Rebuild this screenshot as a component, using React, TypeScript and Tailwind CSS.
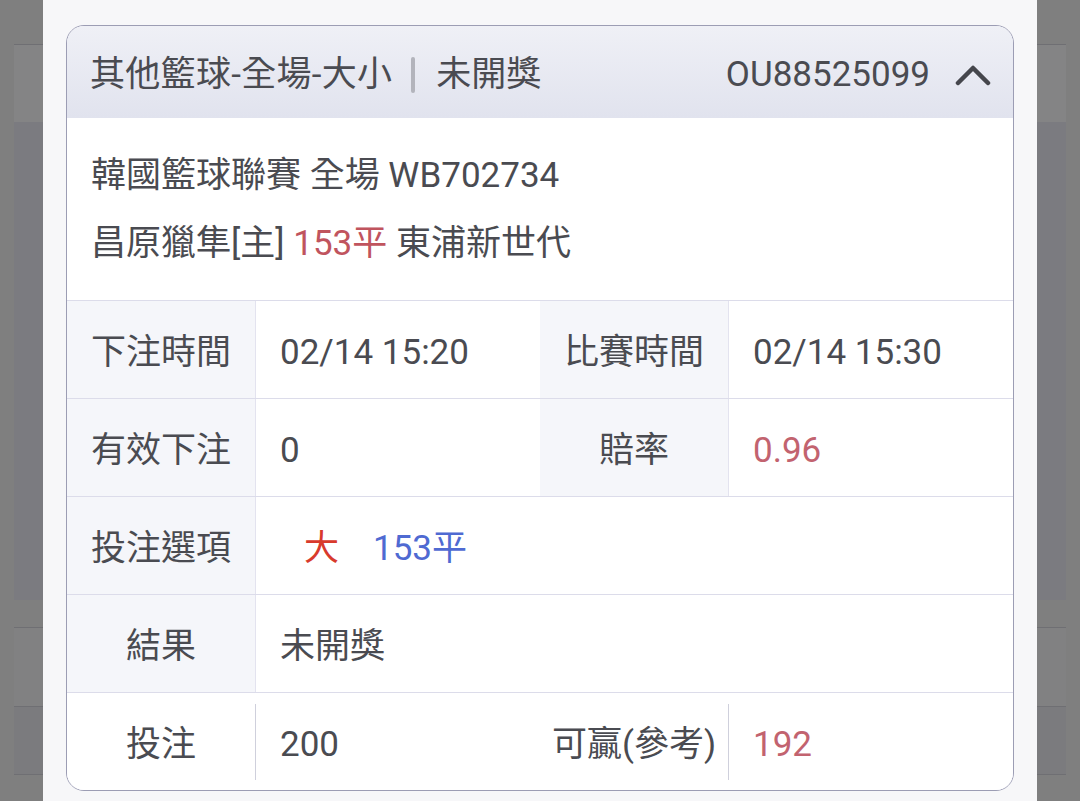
import React from 'react';

const font = "font-[Roboto,'Noto_Sans_CJK_TC',sans-serif]";

function Backdrop() {
  return (
    <div className="mx-[14px] flex flex-col">
      <div className="h-[45px] border-b border-[#6f6f73]" />
      <div className="h-[77px] bg-[#848485]" />
      <div className="h-[478px] bg-[#7b7b80]" />
      <div className="h-[28px] border-b border-[#6f6f73]" />
      <div className="h-[79px] border-b border-[#6f6f73] bg-[#818182]" />
      <div className="h-[68px] border-b border-[#6f6f73] bg-[#7b7b7e]" />
      <div className="h-[25px]" />
    </div>
  );
}

function Label({ children, white = false }: { children: React.ReactNode; white?: boolean }) {
  return (
    <div
      className={`flex items-center justify-center pt-[5px] ${white ? 'bg-white' : 'bg-[#f5f6fa]'}`}
    >
      {children}
    </div>
  );
}

function Value({
  children,
  span = false,
}: {
  children: React.ReactNode;
  span?: boolean;
}) {
  return (
    <div
      className={`flex items-center border-l border-[#e3e3ef] bg-white pl-[24px] pt-[5px] ${
        span ? 'col-span-3' : ''
      }`}
    >
      {children}
    </div>
  );
}

function ShortValue({ children }: { children: React.ReactNode }) {
  return (
    <div className="flex items-center bg-white">
      <div className="flex h-[76px] items-center border-l border-[#cfd0dc] pl-[24px] pt-[5px]">
        {children}
      </div>
    </div>
  );
}

export default function App() {
  return (
    <div className={`relative h-[801px] w-full overflow-hidden bg-[#7f7f7f] ${font}`}>
      <Backdrop />

      <div className="absolute inset-y-0 left-[43px] w-[994px] bg-[#f7f7f9] px-[23px] pt-[25px]">
        <div className="overflow-hidden rounded-[18px] border-[1.5px] border-[#9c9db4] text-[35px] leading-none text-[#4a4b51]">
          {/* header */}
          <div className="flex h-[92px] items-center bg-linear-to-b from-[#eff0f6] to-[#e1e3ee] pl-[23px] pr-[22px] pt-[5px]">
            <span className="tracking-[0.3px]">其他籃球-全場-大小</span>
            <span className="ml-[19px] mr-[21px] h-[36px] w-[4px] rounded-sm bg-[#b3b4bc]" />
            <span>未開獎</span>
            <span className="ml-auto">OU88525099</span>
            <svg width="36" height="24" viewBox="0 0 36 24" className="ml-[25px]">
              <polyline
                points="3,20 18,5 33,20"
                fill="none"
                stroke="#45464c"
                strokeWidth="4.5"
                strokeLinecap="round"
                strokeLinejoin="round"
              />
            </svg>
          </div>

          {/* match info */}
          <div className="bg-white px-[24px] pb-[22px] pt-[24px] leading-[68px]">
            <div>韓國籃球聯賽 全場 WB702734</div>
            <div>
              昌原獵隼[主] <span className="text-[#c0545e]">153平</span> 東浦新世代
            </div>
          </div>

          {/* details */}
          <div className="grid grid-cols-[188px_1fr_188px_1fr] grid-rows-[repeat(5,97px)] gap-y-px bg-[#dcdcea] pt-px">
            <Label>下注時間</Label>
            <Value>02/14 15:20</Value>
            <Label>比賽時間</Label>
            <Value>02/14 15:30</Value>

            <Label>有效下注</Label>
            <Value>0</Value>
            <Label>賠率</Label>
            <Value>
              <span className="text-[#c2636f]">0.96</span>
            </Value>

            <Label>投注選項</Label>
            <Value span>
              <span className="ml-[24px] text-[#d83a2c]">大</span>
              <span className="ml-[34px] text-[#4f6ad2]">153平</span>
            </Value>

            <Label>結果</Label>
            <Value span>未開獎</Value>

            <Label white>投注</Label>
            <ShortValue>200</ShortValue>
            <Label white>可贏(參考)</Label>
            <ShortValue>
              <span className="text-[#c2636f]">192</span>
            </ShortValue>
          </div>
        </div>
      </div>
    </div>
  );
}
